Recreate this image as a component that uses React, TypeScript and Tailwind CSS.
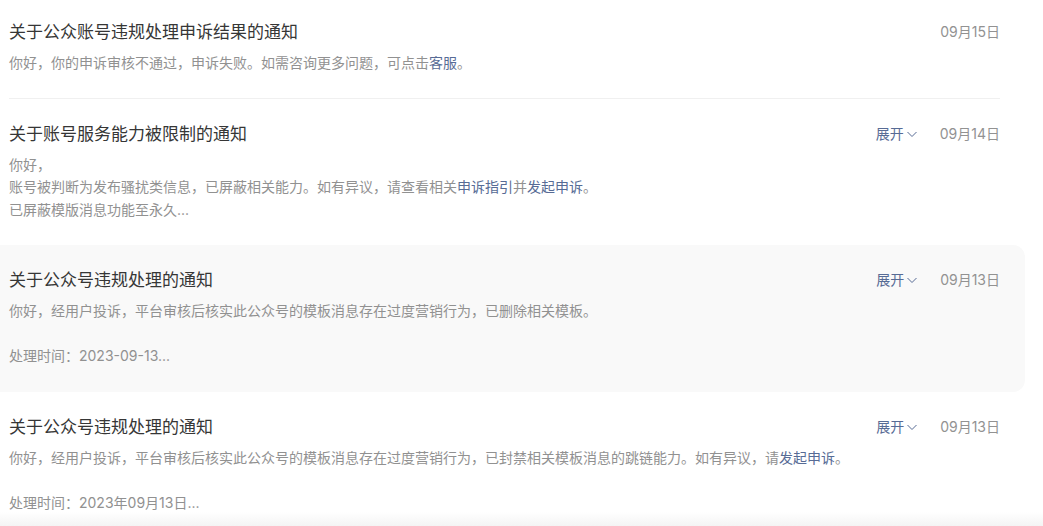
import React from "react";

type Part = { text: string; link?: boolean };

type Notice = {
    id: string;
    title: string;
    date: string;
    expandable: boolean;
    hover?: boolean;
    lines: Part[][];
};

const NOTICES: Notice[] = [
    {
        id: "n1",
        title: "关于公众账号违规处理申诉结果的通知",
        date: "09月15日",
        expandable: false,
        lines: [
            [
                { text: "你好，你的申诉审核不通过，申诉失败。如需咨询更多问题，可点击" },
                { text: "客服", link: true },
                { text: "。" },
            ],
        ],
    },
    {
        id: "n2",
        title: "关于账号服务能力被限制的通知",
        date: "09月14日",
        expandable: true,
        lines: [
            [{ text: "你好，" }],
            [
                { text: "账号被判断为发布骚扰类信息，已屏蔽相关能力。如有异议，请查看相关" },
                { text: "申诉指引", link: true },
                { text: "并" },
                { text: "发起申诉", link: true },
                { text: "。" },
            ],
            [{ text: "已屏蔽模版消息功能至永久..." }],
        ],
    },
    {
        id: "n3",
        title: "关于公众号违规处理的通知",
        date: "09月13日",
        expandable: true,
        hover: true,
        lines: [
            [{ text: "你好，经用户投诉，平台审核后核实此公众号的模板消息存在过度营销行为，已删除相关模板。" }],
            [],
            [{ text: "处理时间：2023-09-13..." }],
        ],
    },
    {
        id: "n4",
        title: "关于公众号违规处理的通知",
        date: "09月13日",
        expandable: true,
        lines: [
            [
                { text: "你好，经用户投诉，平台审核后核实此公众号的模板消息存在过度营销行为，已封禁相关模板消息的跳链能力。如有异议，请" },
                { text: "发起申诉", link: true },
                { text: "。" },
            ],
            [],
            [{ text: "处理时间：2023年09月13日..." }],
        ],
    },
];

function ChevronDown() {
    return (
        <svg width="12" height="10" viewBox="0 0 12 10" className="ml-[2px]">
            <path d="M1.5 3 L6 7.5 L10.5 3" fill="none" stroke="#576b95" strokeWidth="1" />
        </svg>
    );
}

function NoticeItem({ notice, first }: { notice: Notice; first: boolean }) {
    return (
        <div
            className={`-mx-[25px] rounded-xl px-[25px] ${first ? "pt-[20px]" : "pt-[23px]"} pb-[24px] ${
                notice.hover ? "bg-[#f9f9f9]" : ""
            }`}
        >
            <div className="flex items-center justify-between">
                <div className="text-[17px] leading-[24px] text-[#363636]">{notice.title}</div>
                <div className="flex items-center text-[14px] leading-[24px]">
                    {notice.expandable && (
                        <div className="mr-[22px] flex items-center text-[#576b95]">
                            展开
                            <ChevronDown />
                        </div>
                    )}
                    <div className="text-[#929292]">{notice.date}</div>
                </div>
            </div>
            <div className="mt-[8px] text-[14px] leading-[22.5px] text-[#919191]">
                {notice.lines.map((line, i) => (
                    <div key={i} className="h-[22.5px]">
                        {line.map((part, j) =>
                            part.link ? (
                                <span key={j} className="text-[#576b95]">
                                    {part.text}
                                </span>
                            ) : (
                                <span key={j}>{part.text}</span>
                            )
                        )}
                    </div>
                ))}
            </div>
        </div>
    );
}

export default function App() {
    return (
        <div
            className="relative h-[526px] w-[1043px] overflow-hidden bg-white"
            style={{ fontFamily: 'Inter, "Noto Sans CJK SC", sans-serif' }}
        >
            <div className="ml-[9px] w-[991px]">
                {NOTICES.map((notice, i) => (
                    <React.Fragment key={notice.id}>
                        <NoticeItem notice={notice} first={i === 0} />
                        {i === 0 && <div className="-mt-px h-px bg-[#f0f0f0]" />}
                    </React.Fragment>
                ))}
            </div>
            <div className="pointer-events-none absolute bottom-0 left-0 h-[14px] w-full bg-gradient-to-b from-white/0 to-[#f4f4f4]" />
        </div>
    );
}
